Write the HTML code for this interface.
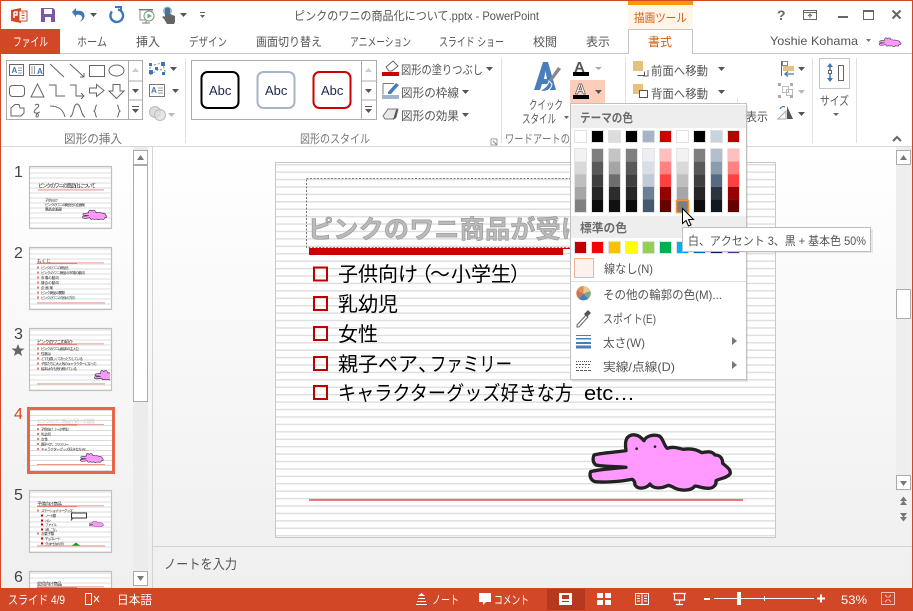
<!DOCTYPE html>
<html lang="ja"><head><meta charset="utf-8"><title>PowerPoint</title>
<style>
html,body{margin:0;padding:0;background:#fff;width:913px;height:611px;overflow:hidden}
svg{display:block;position:absolute;left:0;top:0}
text{font-family:"Liberation Sans","Noto Sans CJK JP",sans-serif;font-size:12px;fill:#555}
.w{fill:#fff}.l{fill:#777}.o{fill:#D35F10}
.m{fill:#666}
</style></head><body>
<svg width="913" height="611" viewBox="0 0 913 611" xmlns="http://www.w3.org/2000/svg">
<defs>
<linearGradient id="bg" x1="0" y1="0" x2="0" y2="1"><stop offset="0" stop-color="#fff"/><stop offset="1" stop-color="#efefef"/></linearGradient>
<pattern id="st" width="10" height="7.42" patternUnits="userSpaceOnUse" y="163"><rect width="10" height="7.42" fill="#fff"/><rect y="1" width="10" height="1.4" fill="#dedede"/></pattern>
<pattern id="ts" width="10" height="5" patternUnits="userSpaceOnUse"><rect width="10" height="5" fill="#fff"/><rect y="1" width="10" height="1" fill="#dcdcdc"/></pattern>
<polygon id="da" points="0,0 7,0 3.5,4" fill="#555"/>
<polygon id="dl" points="0,0 7,0 3.5,4" fill="#bbb"/>
<g id="croc"><path d="M72 105C95 98 130 98 168 92C165 70 165 50 185 45C205 42 215 55 222 62C228 48 250 42 268 48C280 55 282 78 292 85C310 78 325 85 340 88C360 85 380 88 395 98C410 95 425 92 435 105C450 105 458 115 458 130C470 140 485 150 480 162C470 175 450 175 438 182C440 195 430 205 415 205C395 205 385 198 375 198C365 212 340 212 325 208C310 205 300 192 290 198C275 205 250 208 240 192C230 205 205 210 195 195C195 185 190 178 185 178C150 185 100 188 75 185C60 180 58 165 62 155C80 150 130 145 168 142C130 138 95 140 78 135C68 128 68 115 72 105Z" fill="#FF99FF" stroke="#222" stroke-width="10" stroke-linejoin="round"/><circle cx="200" cy="86" r="4" fill="#222"/><circle cx="255" cy="80" r="4" fill="#222"/></g>
<g id="c1"><rect width="13" height="65" fill="#e4e4e4"/><rect x="1" y="1" width="11" height="12.6" fill="#F2F2F2"/><rect x="1" y="13.6" width="11" height="12.6" fill="#D9D9D9"/><rect x="1" y="26.2" width="11" height="12.6" fill="#BFBFBF"/><rect x="1" y="38.8" width="11" height="12.6" fill="#A6A6A6"/><rect x="1" y="51.4" width="11" height="12.6" fill="#808080"/></g>
<g id="c2"><rect width="13" height="65" fill="#e4e4e4"/><rect x="1" y="1" width="11" height="12.6" fill="#7F7F7F"/><rect x="1" y="13.6" width="11" height="12.6" fill="#595959"/><rect x="1" y="26.2" width="11" height="12.6" fill="#3F3F3F"/><rect x="1" y="38.8" width="11" height="12.6" fill="#262626"/><rect x="1" y="51.4" width="11" height="12.6" fill="#0D0D0D"/></g>
<g id="c3"><rect width="13" height="65" fill="#e4e4e4"/><rect x="1" y="1" width="11" height="12.6" fill="#C4C4C4"/><rect x="1" y="13.6" width="11" height="12.6" fill="#A5A5A5"/><rect x="1" y="26.2" width="11" height="12.6" fill="#6E6E6E"/><rect x="1" y="38.8" width="11" height="12.6" fill="#2C2C2C"/><rect x="1" y="51.4" width="11" height="12.6" fill="#111"/></g>
<g id="c5"><rect width="13" height="65" fill="#e4e4e4"/><rect x="1" y="1" width="11" height="12.6" fill="#EBEEF2"/><rect x="1" y="13.6" width="11" height="12.6" fill="#D9DEE6"/><rect x="1" y="26.2" width="11" height="12.6" fill="#C1CBD7"/><rect x="1" y="38.8" width="11" height="12.6" fill="#6B8199"/><rect x="1" y="51.4" width="11" height="12.6" fill="#455A70"/></g>
<g id="c6"><rect width="13" height="65" fill="#e4e4e4"/><rect x="1" y="1" width="11" height="12.6" fill="#FFBFBF"/><rect x="1" y="13.6" width="11" height="12.6" fill="#FF8080"/><rect x="1" y="26.2" width="11" height="12.6" fill="#FF4040"/><rect x="1" y="38.8" width="11" height="12.6" fill="#990000"/><rect x="1" y="51.4" width="11" height="12.6" fill="#660000"/></g>
<g id="c9"><rect width="13" height="65" fill="#e4e4e4"/><rect x="1" y="1" width="11" height="12.6" fill="#B4BFCD"/><rect x="1" y="13.6" width="11" height="12.6" fill="#8B9CB1"/><rect x="1" y="26.2" width="11" height="12.6" fill="#566A82"/><rect x="1" y="38.8" width="11" height="12.6" fill="#2A3543"/><rect x="1" y="51.4" width="11" height="12.6" fill="#111820"/></g>
<clipPath id="cl6"><rect x="27" y="560" width="90" height="28"/></clipPath>
<clipPath id="cl3"><rect x="30" y="329" width="80" height="61"/></clipPath>
</defs>

<!-- base -->
<rect width="913" height="611" fill="#fff"/>
<!-- main work area -->
<rect x="0" y="147" width="913" height="441" fill="url(#bg)"/>
<rect x="152" y="147" width="1" height="441" fill="#d4d4d4"/>

<!-- ===== title bar ===== -->
<path d="M11 10L21 8V23L11 21Z" fill="#D24726"/><rect x="19" y="11" width="8" height="10" fill="#fff" stroke="#D24726"/><path d="M14 12v6M14 12h3v3h-3" fill="none" stroke="#fff" stroke-width="1.4"/><path d="M21.500 13h3M21.500 15.500h3M21.500 18h3" stroke="#D24726" stroke-width="1"/>
<path d="M41 8h12l2 2v12H41Z" fill="#7E57A8"/><rect x="44" y="9" width="8" height="5" fill="#fff"/><rect x="45" y="17" width="6" height="5" fill="#fff"/>
<path d="M72 12l4-4v2.800h3c3.500 0 5.500 2.200 5.500 5 0 3-2 5-5 6 2-1.500 2.800-3 2.600-4.500-.2-1.500-1.500-2.500-3.400-2.500H76v2.400Z" fill="#3F77B5"/>
<use href="#da" x="90" y="13"/>
<path d="M118 9.500a6.300 6.300 0 1 1-6 2" fill="none" stroke="#3F77B5" stroke-width="2.400"/><path d="M115 7h6v5" fill="none" stroke="#3F77B5" stroke-width="2"/>
<rect x="139" y="9" width="14" height="1" fill="#666"/><rect x="140" y="10" width="12" height="10" fill="none" stroke="#888"/><circle cx="149" cy="16" r="5" fill="#fff" stroke="#7a9a7a"/><polygon points="147.500,13.500 152,16 147.500,18.500" fill="#6FAF7F"/><path d="M146 21v2M142 23h8" stroke="#777"/>
<path d="M165 9a3 3 0 0 1 5 0v5l5 2v6l-1 2h-7l-3-5-2-2 2-1 1 1Z" fill="#666"/><circle cx="167.500" cy="11" r="4.500" fill="#3F77B5" opacity=".55"/>
<use href="#da" x="180" y="13"/>
<rect x="200" y="12" width="5" height="1" fill="#666"/><polygon points="200,15 205,15 202.500,18" fill="#666"/>
<text x="294" y="20" textLength="245" lengthAdjust="spacingAndGlyphs">ピンクのワニの商品化について.pptx - PowerPoint</text>

<!-- context tab -->
<rect x="628" y="1" width="65" height="4" fill="#F39A00"/><rect x="628" y="5" width="65" height="24" fill="#FFF5E9"/>
<text x="634" y="22" class="o" textLength="53" lengthAdjust="spacingAndGlyphs">描画ツール</text>

<!-- window controls -->
<text x="777" y="20" style="font-size:14px;font-weight:bold" class="m">?</text>
<rect x="803.500" y="10.500" width="13" height="9" fill="none" stroke="#666"/><path d="M803.500 12.500h13" stroke="#666"/><path d="M810 18v-4M808 16l2-2 2 2" stroke="#666" fill="none"/>
<rect x="838" y="16" width="10" height="2" fill="#666"/>
<rect x="863.500" y="10.500" width="10" height="9" fill="none" stroke="#666"/><rect x="863" y="10" width="11" height="2" fill="#666"/>
<path d="M892.500 10.500l8 8M900.500 10.500l-8 8" stroke="#666" stroke-width="2"/>

<!-- ===== tabs ===== -->
<rect x="0" y="53" width="913" height="1" fill="#c6c6c6"/>
<rect x="1" y="29" width="59" height="25" fill="#D24726"/>
<text x="13" y="46" class="w" textLength="35" lengthAdjust="spacingAndGlyphs">ファイル</text>
<text x="77" y="46" textLength="30" lengthAdjust="spacingAndGlyphs">ホーム</text>
<text x="136" y="46" textLength="24" lengthAdjust="spacingAndGlyphs">挿入</text>
<text x="189" y="46" textLength="38" lengthAdjust="spacingAndGlyphs">デザイン</text>
<text x="256" y="46" textLength="66" lengthAdjust="spacingAndGlyphs">画面切り替え</text>
<text x="350" y="46" textLength="61" lengthAdjust="spacingAndGlyphs">アニメーション</text>
<text x="439" y="46" textLength="65" lengthAdjust="spacingAndGlyphs">スライド ショー</text>
<text x="533" y="46" textLength="24" lengthAdjust="spacingAndGlyphs">校閲</text>
<text x="586" y="46" textLength="24" lengthAdjust="spacingAndGlyphs">表示</text>
<path d="M628.500 54V29.500h64V54" fill="#fff" stroke="#c6c6c6"/><rect x="629" y="52" width="63" height="3" fill="#fff"/>
<text x="648" y="46" class="o" textLength="24" lengthAdjust="spacingAndGlyphs">書式</text>
<text x="770" y="45" textLength="88" lengthAdjust="spacingAndGlyphs">Yoshie Kohama</text>
<polygon points="866,39 871,39 868.500,42" fill="#777"/>
<g transform="translate(876,35.500) scale(.052)"><use href="#croc"/></g>

<!-- ===== ribbon ===== -->
<rect x="0" y="146" width="913" height="1" fill="#d6d6d6"/>
<rect x="185" y="58" width="1" height="85" fill="#e0e0e0"/>
<rect x="501" y="58" width="1" height="85" fill="#e0e0e0"/>
<rect x="625" y="58" width="1" height="85" fill="#e0e0e0"/>
<rect x="812" y="58" width="1" height="85" fill="#e0e0e0"/>
<rect x="856" y="58" width="1" height="85" fill="#e0e0e0"/>

<!-- shape gallery -->
<rect x="6.500" y="60.500" width="136" height="59" fill="#fff" stroke="#ababab"/>
<path d="M128.500 60v60M128.500 81h14M128.500 100h14" stroke="#ababab" fill="none"/>
<polygon points="132,72 139,72 135.500,68" fill="#ccc"/><use href="#da" x="132" y="89"/><rect x="132" y="106" width="7" height="1" fill="#555"/><use href="#da" x="132" y="109"/>
<g fill="none" stroke="#666">
<rect x="9.500" y="64.500" width="14" height="11"/><path d="M18 68h4M18 70.500h4M18 73h4" stroke="#999"/>
<rect x="29.500" y="64.500" width="14" height="11"/><path d="M32 66v8M34.500 66v8" stroke="#999"/>
<path d="M50 64l14 13M70 64l14 13"/><path d="M84 73v4h-4"/>
<rect x="89.500" y="65.500" width="15" height="11"/><ellipse cx="116.500" cy="70.500" rx="7.500" ry="5.500"/>
<rect x="9.500" y="85.500" width="15" height="11" rx="3"/><path d="M37.500 84l6.500 13H31Z"/>
<path d="M49 85h7v11h9M70 85h6v11h8m-3-3l3 3-3 3"/>
<path d="M89.500 88h7v-3.500l7.500 6-7.500 6V93h-7Z"/><path d="M113 84.500h7V91h4l-7.500 7.500L109 91h4Z"/>
<path d="M11 116v-8l4-3.500h4l1 3.500h4v5l-3 3Z"/><path d="M35 105c4-2 5 1 2 3s-4 5-1 5 3 4 1 4-1-4 3-5"/>
<path d="M50 106c8 0 13 3 15 11M70 117c4-1 3-13 7-13s4 12 8 13"/>
<path d="M97 105c-2 0-1 5-3 6 2 1 1 6 3 6M117 105c2 0 1 5 3 6-2 1-1 6-3 6"/>
</g>
<text x="11.500" y="73" style="font-size:8px;font-weight:bold;fill:#3F77B5">A</text><text x="37" y="74" style="font-size:8px;font-weight:bold;fill:#3F77B5">A</text>

<!-- edit shape etc -->
<path d="M150 66l12-3 3 8-6-2-9 6Z" fill="none" stroke="#888" stroke-dasharray="2 2"/>
<g fill="#3F77B5"><rect x="149" y="70" width="4" height="4"/><rect x="149" y="63" width="3" height="3"/><rect x="161" y="62" width="4" height="4"/><rect x="155" y="67" width="3" height="3"/><rect x="162" y="72" width="3" height="3"/></g>
<use href="#da" x="170" y="67"/>
<rect x="149.500" y="84.500" width="15" height="12" fill="#fff" stroke="#777"/><text x="151" y="93" style="font-size:8px;font-weight:bold;fill:#3F77B5">A</text><path d="M158 88h5M158 90.500h5M158 93h5" stroke="#999"/>
<use href="#da" x="172" y="89"/>
<circle cx="155" cy="112" r="5.500" fill="#ddd" stroke="#bbb"/><circle cx="160" cy="115" r="5.500" fill="#ddd" stroke="#bbb" fill-opacity=".7"/>
<use href="#dl" x="168" y="113"/>
<text x="64" y="143" class="l" textLength="58" lengthAdjust="spacingAndGlyphs">図形の挿入</text>

<!-- style gallery -->
<rect x="191.500" y="60.500" width="185" height="59" fill="#fff" stroke="#ababab"/>
<path d="M361.500 60v60M361.500 81h15M361.500 100h15" stroke="#ababab" fill="none"/>
<polygon points="365,72 372,72 368.500,68" fill="#ccc"/><use href="#da" x="365" y="89"/><rect x="365" y="106" width="7" height="1" fill="#555"/><use href="#da" x="365" y="109"/>
<rect x="201.500" y="72" width="37" height="36" rx="6" fill="#fff" stroke="#000" stroke-width="2"/>
<rect x="257.500" y="72" width="37" height="36" rx="6" fill="#fff" stroke="#A5B5C9" stroke-width="2"/>
<rect x="313.500" y="72" width="37" height="36" rx="6" fill="#fff" stroke="#CC0000" stroke-width="2"/>
<text x="209" y="95" style="font-size:13px;fill:#1c2a4a">Abc</text><text x="265" y="95" style="font-size:13px;fill:#1c2a4a">Abc</text><text x="321" y="95" style="font-size:13px;fill:#1c2a4a">Abc</text>

<path d="M386 67l7-6 5 5-6 5h-3Z" fill="#fff" stroke="#666"/><rect x="382" y="72" width="17" height="4" fill="#C00"/>
<text x="401" y="74" textLength="82" lengthAdjust="spacingAndGlyphs">図形の塗りつぶし</text><use href="#da" x="486" y="67"/>
<path d="M383 83.500h11M383 83.500v11" stroke="#777" fill="none"/><path d="M388 92l8-9 3 2-8 9h-3Z" fill="#4A7EBB"/><rect x="382" y="95" width="17" height="4" fill="#A5B5C9"/>
<text x="401" y="97" textLength="58" lengthAdjust="spacingAndGlyphs">図形の枠線</text><use href="#da" x="462" y="90"/>
<path d="M383 116l5-7h10l-2 8-3 2h-8Z" fill="#e8e8e8" stroke="#777"/><path d="M396 110l2-1-2 9-3 2Z" fill="#555"/>
<text x="401" y="120" textLength="58" lengthAdjust="spacingAndGlyphs">図形の効果</text><use href="#da" x="462" y="113"/>
<text x="300" y="143" class="l" textLength="70" lengthAdjust="spacingAndGlyphs">図形のスタイル</text>
<rect x="491" y="139" width="6" height="6" fill="none" stroke="#888" stroke-width=".8"/><path d="M493 141l4 4" stroke="#888"/>

<!-- wordart -->
<path d="M543 62h5l8 28h-6l-2-6h-6l-2 6h-6Z" fill="#4A7EBB"/><path d="M544 79h3l-1.500-8Z" fill="#fff"/>
<path d="M561 69l-9 12-3-1 9-13Z" fill="#888"/><path d="M549 81c-1 5-5 7-9 10 5 1 11 0 12-7Z" fill="#4A7EBB" stroke="#fff"/>
<text x="529" y="109" textLength="34" lengthAdjust="spacingAndGlyphs">クイック</text>
<text x="522" y="123" textLength="34" lengthAdjust="spacingAndGlyphs">スタイル</text><polygon points="564,116 569,116 566.500,119" fill="#666"/>
<text x="505" y="143" class="l" textLength="65" lengthAdjust="spacingAndGlyphs">ワードアートの</text>
<text x="574" y="72" style="font-size:15px;font-weight:bold;fill:#555">A</text><rect x="573" y="72" width="16" height="4" fill="#000"/>
<polygon points="595,67 602,67 598.500,70" fill="#aaa"/>
<rect x="570" y="80" width="35" height="24" fill="#FCCDB8"/>
<text x="575" y="94" style="font-size:15px;font-weight:bold;fill:#fff;stroke:#555;stroke-width:.7">A</text><rect x="573" y="95" width="16" height="4" fill="#000"/>
<use href="#da" x="595" y="90"/>

<!-- arrange -->
<rect x="633" y="61" width="10" height="10" fill="#E8C07D"/><path d="M644.500 71.500v4h-7" fill="none" stroke="#555"/><path d="M648 70v6h-5" fill="none" stroke="#666"/>
<text x="651" y="75" textLength="57" lengthAdjust="spacingAndGlyphs">前面へ移動</text><use href="#da" x="718" y="67"/>
<rect x="633" y="84" width="10" height="10" fill="#E8C07D"/><rect x="639.500" y="90.500" width="8" height="7" fill="#fff" stroke="#555"/>
<text x="651" y="98" textLength="57" lengthAdjust="spacingAndGlyphs">背面へ移動</text><use href="#da" x="718" y="90"/>
<text x="746" y="121" textLength="22" lengthAdjust="spacingAndGlyphs">表示</text>
<rect x="737" y="98" width="1" height="24" fill="#e0e0e0"/>
<rect x="781" y="61" width="1" height="15" fill="#666"/><rect x="782.500" y="61.500" width="5" height="4" fill="#fff" stroke="#888"/><rect x="783" y="66" width="11" height="5" fill="#E8C07D"/><path d="M794 74h-9m3-2.500l-3 2.500 3 2.500" fill="none" stroke="#3F77B5" stroke-width="1.300"/>
<use href="#da" x="798" y="67"/>
<g fill="none" stroke="#bbb"><rect x="782.500" y="86.500" width="6" height="6"/><rect x="786.500" y="89.500" width="6" height="6"/></g><g fill="#aaa"><rect x="778" y="83" width="3" height="3"/><rect x="790" y="83" width="3" height="3"/><rect x="778" y="95" width="3" height="3"/><rect x="790" y="95" width="3" height="3"/></g>
<use href="#dl" x="798" y="90"/>
<path d="M778 119l8-8v8Z" fill="#fff" stroke="#aaa"/><path d="M787 106l6 13h-6Z" fill="#555"/><path d="M780 109c1-2 3-3 5-2" stroke="#3F77B5" fill="none" stroke-width="1.300"/>
<use href="#da" x="798" y="112"/>
<rect x="819.500" y="58.500" width="30" height="30" fill="#fff" stroke="#c6c6c6"/>
<path d="M830 65v6M830 80v-6" stroke="#3F77B5" stroke-width="1.500"/><polygon points="827,67 833,67 830,63" fill="#3F77B5"/><polygon points="827,78 833,78 830,82" fill="#3F77B5"/><rect x="828.500" y="70.500" width="3" height="3" fill="#fff" stroke="#666"/><rect x="838.500" y="65.500" width="5" height="15" fill="#fff" stroke="#666"/>
<text x="820" y="105" textLength="29" lengthAdjust="spacingAndGlyphs">サイズ</text>
<polygon points="833,113 839,113 836,116" fill="#666"/>
<path d="M893 141l4-4 4 4" fill="none" stroke="#666" stroke-width="2"/>

<!-- ===== thumbnail pane ===== -->
<rect x="0" y="147" width="1" height="441" fill="#D24726"/>
<rect x="133" y="147" width="15" height="441" fill="#ececec"/>
<rect x="133.500" y="150.500" width="14" height="14" fill="#fff" stroke="#ababab"/><polygon points="137,160 144,160 140.500,155" fill="#777"/>
<rect x="133.500" y="165.500" width="14" height="236" fill="#fff" stroke="#ababab"/>
<rect x="133.500" y="571.500" width="14" height="14" fill="#fff" stroke="#ababab"/><polygon points="137,576 144,576 140.500,581" fill="#777"/>

<g style="font-size:16px">
<text x="14" y="177" style="font-size:16px;fill:#444">1</text>
<text x="14" y="258" style="font-size:16px;fill:#444">2</text>
<text x="14" y="339" style="font-size:16px;fill:#444">3</text>
<text x="14" y="419" style="font-size:16px;fill:#D24726">4</text>
<text x="14" y="500" style="font-size:16px;fill:#444">5</text>
<text x="14" y="582" style="font-size:16px;fill:#444">6</text>
</g>
<polygon points="18,344 19.800,348.500 24.500,348.500 20.800,351.500 22,356 18,353.500 14,356 15.200,351.500 11.500,348.500 16.200,348.500" fill="#666"/>

<!-- thumb 1 -->
<g transform="translate(30,166.500)">
<rect x="-.500" y="0" width="82" height="62" fill="url(#ts)" stroke="#c0c0c0" stroke-width="1.200"/>
<text x="8" y="21" style="font-size:5.200px;fill:#222" textLength="58">ピンクのワニの商品化について</text>
<rect x="8" y="23" width="66" height=".9" fill="#E08070"/>
<text x="15" y="35" style="font-size:3.500px;fill:#333" textLength="13">子供向け</text>
<text x="15" y="39.500" style="font-size:3.500px;fill:#222" textLength="40">ピンクのワニの商品化の企画案</text>
<text x="15" y="44" style="font-size:3.500px;fill:#000" textLength="17">商品企画部</text>
<g transform="translate(49,41) scale(.058)"><use href="#croc"/></g>
</g>
<!-- thumb 2 -->
<g transform="translate(30,247.500)">
<rect x="-.500" y="0" width="82" height="62" fill="url(#ts)" stroke="#c0c0c0" stroke-width="1.200"/>
<text x="7" y="15" style="font-size:4.500px;fill:#222">もくじ</text>
<rect x="7" y="15" width="40" height="1.500" fill="#E08070"/><rect x="7" y="15" width="67" height=".7" fill="#E08070"/>
<rect x="7" y="19" width="2" height="2" fill="#E08070"/><rect x="7" y="24" width="2" height="2" fill="#E08070"/><rect x="7" y="29" width="2" height="2" fill="#E08070"/><rect x="7" y="34" width="2" height="2" fill="#E08070"/><rect x="7" y="39" width="2" height="2" fill="#E08070"/><rect x="7" y="44" width="2" height="2" fill="#E08070"/><rect x="7" y="49" width="2" height="2" fill="#E08070"/>
<text x="11" y="21.500" style="font-size:3.500px;fill:#445" textLength="28">ピンクのワニの商品化</text>
<text x="11" y="26.500" style="font-size:3.500px;fill:#222" textLength="44">ピンクのワニ商品の市場の動向</text>
<text x="11" y="31.500" style="font-size:3.500px;fill:#222" textLength="18">市場の動向</text>
<text x="11" y="36.500" style="font-size:3.500px;fill:#222" textLength="18">競合の動向</text>
<text x="11" y="41.500" style="font-size:3.500px;fill:#222" textLength="12">企画案</text>
<text x="11" y="46.500" style="font-size:3.500px;fill:#222" textLength="24">ピンク商品の開発</text>
<text x="11" y="51.500" style="font-size:3.500px;fill:#445" textLength="34">ピンクのワニの今後の方向</text>
<rect x="7" y="55" width="68" height=".8" fill="#E08070"/>
</g>
<!-- thumb 3 -->
<g transform="translate(30,328.500)">
<rect x="-.500" y="0" width="82" height="62" fill="url(#ts)" stroke="#c0c0c0" stroke-width="1.200"/>
<text x="7" y="15" style="font-size:4.500px;fill:#222" textLength="36">ピンクのワニの紹介</text>
<rect x="7" y="15" width="40" height="1.500" fill="#E08070"/><rect x="7" y="15" width="67" height=".7" fill="#E08070"/>
<rect x="7" y="19" width="2" height="2" fill="#E08070"/><rect x="7" y="24" width="2" height="2" fill="#E08070"/><rect x="7" y="29" width="2" height="2" fill="#E08070"/><rect x="7" y="34" width="2" height="2" fill="#E08070"/><rect x="7" y="39" width="2" height="2" fill="#E08070"/>
<text x="11" y="21.500" style="font-size:3.500px;fill:#222" textLength="38">ピンクのワニは絵本の主人公</text>
<text x="11" y="26.500" style="font-size:3.500px;fill:#222" textLength="10">性格は</text>
<text x="11" y="31.500" style="font-size:3.500px;fill:#222" textLength="42">とても優しくておっとりしている</text>
<text x="11" y="36.500" style="font-size:3.500px;fill:#222" textLength="56">子供たちに大人気のキャラクターになった</text>
<text x="11" y="41.500" style="font-size:3.500px;fill:#222" textLength="36">絵本は今も売れ続けている</text>
<rect x="7" y="55" width="68" height=".8" fill="#E08070"/>
</g>
<g clip-path="url(#cl3)"><g transform="translate(91,368) scale(.058)"><use href="#croc"/></g></g>
<!-- thumb 4 -->
<g transform="translate(30,409)">
<rect x="-1.500" y="-.500" width="85" height="64" fill="url(#ts)" stroke="#E8674A" stroke-width="3"/>
<text x="7" y="14" style="font-size:5px;fill:#ccc" textLength="58">ピンクのワニ商品が受ける客層</text>
<rect x="7" y="15" width="40" height="1.500" fill="#E08070"/><rect x="7" y="15" width="67" height=".7" fill="#E08070"/>
<rect x="7" y="19" width="2" height="2" fill="#E08070"/><rect x="7" y="24" width="2" height="2" fill="#E08070"/><rect x="7" y="29" width="2" height="2" fill="#E08070"/><rect x="7" y="34" width="2" height="2" fill="#E08070"/><rect x="7" y="39" width="2" height="2" fill="#E08070"/>
<text x="11" y="21.500" style="font-size:3.500px;fill:#222" textLength="30">子供向け（～小学生）</text>
<text x="11" y="26.500" style="font-size:3.500px;fill:#222" textLength="10">乳幼児</text>
<text x="11" y="31.500" style="font-size:3.500px;fill:#222" textLength="7">女性</text>
<text x="11" y="36.500" style="font-size:3.500px;fill:#222" textLength="28">親子ペア、ファミリー</text>
<text x="11" y="41.500" style="font-size:3.500px;fill:#222" textLength="48">キャラクターグッズ好きな方 etc…</text>
<g transform="translate(47,42) scale(.055)"><use href="#croc"/></g>
<rect x="7" y="55" width="68" height=".8" fill="#E08070"/>
</g>
<!-- thumb 5 -->
<g transform="translate(30,490.500)">
<rect x="-.500" y="0" width="82" height="62" fill="url(#ts)" stroke="#c0c0c0" stroke-width="1.200"/>
<text x="7" y="15" style="font-size:4.500px;fill:#222" textLength="25">子供向け商品</text>
<rect x="7" y="15" width="40" height="1.500" fill="#E08070"/><rect x="7" y="15" width="67" height=".7" fill="#E08070"/>
<rect x="7" y="19" width="2" height="2" fill="#E08070"/><rect x="11" y="24" width="2" height="2" fill="#C00"/><rect x="11" y="29" width="2" height="2" fill="#C00"/><rect x="11" y="33" width="2" height="2" fill="#C00"/><rect x="11" y="38" width="2" height="2" fill="#C00"/><rect x="7" y="42" width="2" height="2" fill="#E08070"/><rect x="11" y="47" width="2" height="2" fill="#C00"/><rect x="11" y="52" width="2" height="2" fill="#C00"/>
<text x="11" y="21.500" style="font-size:3.500px;fill:#222" textLength="32">ステーショナリーグッズ</text>
<text x="15" y="26.500" style="font-size:3.500px;fill:#222" textLength="11">ノート類</text>
<text x="15" y="31.500" style="font-size:3.500px;fill:#222" textLength="6">ペン</text>
<text x="15" y="35.500" style="font-size:3.500px;fill:#222" textLength="12">ファイル</text>
<text x="15" y="40.500" style="font-size:3.500px;fill:#222" textLength="12">消しゴム</text>
<text x="11" y="44.500" style="font-size:3.500px;fill:#222" textLength="13">お菓子類</text>
<text x="15" y="49.500" style="font-size:3.500px;fill:#222" textLength="16">チョコレート</text>
<text x="15" y="54.500" style="font-size:3.500px;fill:#222" textLength="20">クッキーとキャンディ</text>
<rect x="41.500" y="22.500" width="15" height="5" fill="#fff" stroke="#333"/><path d="M43 27l-2 3" stroke="#333"/>
<g transform="translate(57,29) scale(.035)"><use href="#croc"/></g>
<path d="M42 55l4-3 4 3Z" fill="#1AA01A"/>
<rect x="7" y="55" width="68" height=".8" fill="#E08070"/>
</g>
<!-- thumb 6 -->
<g clip-path="url(#cl6)"><g transform="translate(30,571.500)">
<rect x="-.500" y="0" width="82" height="62" fill="url(#ts)" stroke="#c0c0c0" stroke-width="1.200"/>
<text x="7" y="14" style="font-size:4.500px;fill:#222" textLength="25">幼児向け商品</text>
<rect x="7" y="15" width="40" height="1.500" fill="#E08070"/><rect x="7" y="15" width="67" height=".7" fill="#E08070"/>
</g></g>

<!-- ===== main slide ===== -->
<rect x="275.500" y="162.500" width="500" height="375" fill="url(#st)" stroke="#c8c8c8"/>
<rect x="306.500" y="178.500" width="440" height="69" fill="none" stroke="#555" stroke-width=".8" stroke-dasharray="2 1.500"/>
<text x="308" y="238" style="font-size:25px;font-weight:bold;fill:#BBBBBB;stroke:#999;stroke-width:.7" textLength="278" lengthAdjust="spacing">ピンクのワニ商品が受け</text>
<rect x="309" y="248" width="254" height="7" fill="#CC0000"/><rect x="309" y="248" width="434" height="1" fill="#CC0000"/>
<g fill="none" stroke="#C00000" stroke-width="2">
<rect x="314" y="267.500" width="13" height="13"/><rect x="314" y="297" width="13" height="13"/><rect x="314" y="327" width="13" height="13"/><rect x="314" y="357" width="13" height="13"/><rect x="314" y="386" width="13" height="13"/>
</g>
<g>
<text x="338" y="281" style="font-size:20px;fill:#000">子供向け</text>
<text x="412" y="281" style="font-size:20px;fill:#000">（</text>
<text x="430" y="281" style="font-size:20px;fill:#000">～</text>
<text x="451" y="281" style="font-size:20px;fill:#000">小学生</text>
<text x="510" y="281" style="font-size:20px;fill:#000">）</text>
<text x="338" y="311" style="font-size:20px;fill:#000">乳幼児</text>
<text x="338" y="341" style="font-size:20px;fill:#000">女性</text>
<text x="338" y="371" style="font-size:20px;fill:#000">親子ペア、</text>
<text x="430" y="371" style="font-size:20px;fill:#000" textLength="82" lengthAdjust="spacingAndGlyphs">ファミリー</text>
<text x="338" y="400" style="font-size:20px;fill:#000" textLength="235" lengthAdjust="spacingAndGlyphs">キャラクターグッズ好きな方</text>
<text x="584" y="400" style="font-size:20px;fill:#000" textLength="51" lengthAdjust="spacingAndGlyphs">etc…</text>
</g>
<g transform="translate(570,420) scale(.3333)"><use href="#croc"/></g>
<rect x="309" y="499.500" width="434" height="1" fill="#D40000"/>

<!-- main scrollbar -->
<rect x="896" y="147" width="16" height="344" fill="#eee"/>
<rect x="896.500" y="150.500" width="14" height="14" fill="#fff" stroke="#ababab"/><polygon points="900,160 907,160 903.500,155" fill="#777"/>
<rect x="896.500" y="289.500" width="14" height="29" fill="#fff" stroke="#ababab"/>
<rect x="896.500" y="475.500" width="14" height="14" fill="#fff" stroke="#ababab"/><polygon points="900,481 907,481 903.500,486" fill="#777"/>
<polygon points="900,501 907,501 903.500,496.500" fill="#777"/><polygon points="900,505 907,505 903.500,500.500" fill="#777"/>
<polygon points="900,513 907,513 903.500,517.500" fill="#777"/><polygon points="900,517 907,517 903.500,521.500" fill="#777"/>

<!-- notes -->
<rect x="153" y="546" width="760" height="1" fill="#d4d4d4"/>
<text x="164" y="569" style="font-size:13.500px" textLength="73" lengthAdjust="spacingAndGlyphs">ノートを入力</text>

<!-- ===== dropdown ===== -->
<rect x="572" y="105" width="176" height="277" fill="#000" opacity=".08"/>
<rect x="570.500" y="103.500" width="176" height="276" fill="#fff" stroke="#c0c0c0"/>
<rect x="571" y="105" width="175" height="23" fill="#EEEEEE"/>
<text x="580" y="122" style="font-weight:bold;fill:#6b6b6b" textLength="53" lengthAdjust="spacingAndGlyphs">テーマの色</text>
<g stroke="#e2e2e2">
<rect x="574.500" y="130.500" width="12" height="12" fill="#fff"/><rect x="591.500" y="130.500" width="12" height="12" fill="#000"/><rect x="608.500" y="130.500" width="12" height="12" fill="#DDDDDD"/><rect x="625.500" y="130.500" width="12" height="12" fill="#000"/><rect x="642.500" y="130.500" width="12" height="12" fill="#A5B4C6"/><rect x="659.500" y="130.500" width="12" height="12" fill="#CC0000"/><rect x="676.500" y="130.500" width="12" height="12" fill="#fff"/><rect x="693.500" y="130.500" width="12" height="12" fill="#000"/><rect x="710.500" y="130.500" width="12" height="12" fill="#C9D3E0"/><rect x="727.500" y="130.500" width="12" height="12" fill="#B40000"/>
</g>
<use href="#c1" x="574" y="148"/><use href="#c2" x="591" y="148"/><use href="#c3" x="608" y="148"/><use href="#c2" x="625" y="148"/><use href="#c5" x="642" y="148"/><use href="#c6" x="659" y="148"/><use href="#c1" x="676" y="148"/><use href="#c2" x="693" y="148"/><use href="#c9" x="710" y="148"/><use href="#c6" x="727" y="148"/>
<rect x="676.500" y="200.500" width="12" height="12" fill="#7F7F7F" stroke="#F29436" stroke-width="1.500"/>
<rect x="571" y="216" width="175" height="22" fill="#EEEEEE"/>
<text x="580" y="232" style="font-weight:bold;fill:#6b6b6b" textLength="47" lengthAdjust="spacingAndGlyphs">標準の色</text>
<g stroke="#e2e2e2">
<rect x="574.500" y="241.500" width="12" height="12" fill="#C00000"/><rect x="591.500" y="241.500" width="12" height="12" fill="#FF0000"/><rect x="608.500" y="241.500" width="12" height="12" fill="#FFC000"/><rect x="625.500" y="241.500" width="12" height="12" fill="#FFFF00"/><rect x="642.500" y="241.500" width="12" height="12" fill="#92D050"/><rect x="659.500" y="241.500" width="12" height="12" fill="#00B050"/><rect x="676.500" y="241.500" width="12" height="12" fill="#00B0F0"/><rect x="693.500" y="241.500" width="12" height="12" fill="#0070C0"/><rect x="710.500" y="241.500" width="12" height="12" fill="#002060"/><rect x="727.500" y="241.500" width="12" height="12" fill="#7030A0"/>
</g>
<rect x="574.500" y="258.500" width="19" height="19" fill="#FDF1EE" stroke="#F3B48F"/>
<text x="604" y="273" textLength="49" lengthAdjust="spacingAndGlyphs">線なし(N)</text>
<rect x="571" y="281" width="175" height="1" fill="#e0e0e0"/>
<path d="M583.500 293.500V286a7.500 7.500 0 0 1 7 5Z" fill="#E8C988"/><path d="M583.500 293.500l7-2.500a7.500 7.500 0 0 1-2 7.500Z" fill="#7FA58C"/><path d="M583.500 293.500l5 5a7.500 7.500 0 0 1-10 0Z" fill="#4A7EBB"/><path d="M583.500 293.500l-5 5a7.500 7.500 0 0 1-1.500-8.500Z" fill="#D9704A"/><path d="M583.500 293.500l-6.500-3.500a7.500 7.500 0 0 1 6.500-4Z" fill="#E0905A"/>
<text x="603" y="299" textLength="119" lengthAdjust="spacingAndGlyphs">その他の輪郭の色(M)...</text>
<path d="M577 325l9-10 2 2-9 10h-2Z" fill="#fff" stroke="#666"/><path d="M584 314l3-3 1-1 3 3-1 1-3 3Z" fill="#555"/>
<text x="603" y="323" textLength="53" lengthAdjust="spacingAndGlyphs">スポイト(E)</text>
<rect x="576" y="335" width="15" height="1" fill="#4A7EBB"/><rect x="576" y="338" width="15" height="1.500" fill="#4A7EBB"/><rect x="576" y="342" width="15" height="2" fill="#4A7EBB"/><rect x="576" y="345.500" width="15" height="3" fill="#4A7EBB"/>
<text x="603" y="347" textLength="42" lengthAdjust="spacingAndGlyphs">太さ(W)</text>
<polygon points="732,337 737,341 732,345" fill="#777"/>
<path d="M576 361.500h15" stroke="#555" stroke-dasharray="1 1"/><path d="M576 364.500h15" stroke="#555" stroke-dasharray="2 1"/><path d="M576 367.500h15" stroke="#555" stroke-dasharray="1 2"/><path d="M576 370.500h15" stroke="#555" stroke-dasharray="3 1"/>
<text x="603" y="371" textLength="72" lengthAdjust="spacingAndGlyphs">実線/点線(D)</text>
<polygon points="732,361 737,365 732,369" fill="#777"/>

<!-- tooltip -->
<rect x="684" y="229" width="189" height="24" fill="#000" opacity=".08"/>
<rect x="682.500" y="227.500" width="188" height="24" fill="#fff" stroke="#bebebe"/>
<text x="688" y="245" textLength="178" lengthAdjust="spacingAndGlyphs">白、アクセント 3、黒 + 基本色 50%</text>
<!-- cursor -->
<path d="M682.500 208.500v15l3.500-3 2.500 5.500 2.500-1-2.500-5.500h5Z" fill="#fff" stroke="#000" stroke-width="1"/>

<!-- ===== status bar ===== -->
<rect x="0" y="588" width="913" height="23" fill="#D24726"/>
<rect x="912" y="0" width="1" height="611" fill="#D24726"/><rect x="0" y="0" width="913" height="1" fill="#D24726"/><rect x="0" y="0" width="1" height="588" fill="#D24726"/>
<text x="8" y="604" class="w" textLength="57" lengthAdjust="spacingAndGlyphs">スライド 4/9</text>
<path d="M85.500 593.500h6v11h-6Z M91.500 593.500v11" fill="none" stroke="#fff"/><path d="M94 596l5 6M99 596l-5 6" stroke="#fff"/>
<text x="117" y="604" class="w" textLength="35" lengthAdjust="spacingAndGlyphs">日本語</text>
<polygon points="421.500,593 425,596 418,596" fill="#fff"/><path d="M418 598.500h7M417 601.500h9M416 604.500h11" stroke="#fff"/>
<text x="432" y="604" class="w" textLength="27" lengthAdjust="spacingAndGlyphs">ノート</text>
<path d="M479 593h12v9h-5l-3 3v-3h-4Z" fill="#fff"/>
<text x="494" y="604" class="w" textLength="35" lengthAdjust="spacingAndGlyphs">コメント</text>
<rect x="547" y="589" width="38" height="21" fill="#B5391C"/>
<rect x="559" y="593" width="13" height="12" fill="#fff"/><rect x="562" y="595" width="7" height="4" fill="#B5391C"/><rect x="562" y="601" width="7" height="1" fill="#B5391C"/>
<rect x="597" y="593" width="6" height="5" fill="#fff"/><rect x="605" y="593" width="6" height="5" fill="#fff"/><rect x="597" y="600" width="6" height="5" fill="#fff"/><rect x="605" y="600" width="6" height="5" fill="#fff"/>
<rect x="635.500" y="593.500" width="13" height="11" fill="none" stroke="#fff"/><path d="M642 593v12M637 596h3M637 598.500h3M637 601h3M644 596h3M644 598.500h3M644 601h3" stroke="#fff"/>
<path d="M673 593.500h13M674.500 594v6h10v-6M679.500 600v4M676 604.500h7" fill="none" stroke="#fff" stroke-width="1.200"/>
<rect x="704" y="598" width="6" height="2" fill="#fff"/>
<rect x="714" y="598" width="100" height="1" fill="#fff"/>
<rect x="737" y="592" width="4" height="13" fill="#fff"/>
<rect x="764" y="596" width="1" height="5" fill="#fff"/>
<path d="M817 598.500h8M821 594.500v8" stroke="#fff" stroke-width="2"/>
<text x="841" y="604" class="w" textLength="26" lengthAdjust="spacingAndGlyphs">53%</text>
<rect x="881.500" y="592.500" width="13" height="12" fill="none" stroke="#F3C0B0"/><path d="M885 595l2.500 2.500M891 595l-2.500 2.500M885 602l2.500-2.500M891 602l-2.500-2.500" stroke="#F3C0B0"/>
</svg>
</body></html>
